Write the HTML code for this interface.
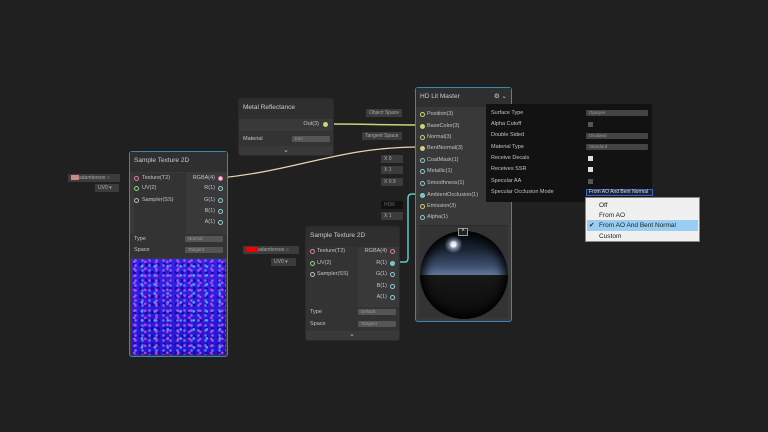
<!DOCTYPE html>
<html><head><meta charset="utf-8"><style>
*{margin:0;padding:0;box-sizing:border-box}
body{width:768px;height:432px;background:#202020;position:relative;overflow:hidden;font-family:"Liberation Sans",sans-serif;font-size:5.5px;color:#c4c4c4}
.a{position:absolute}
.node{position:absolute;background:#393939;border-radius:3px;border:1px solid #2a2a2a}
.sel{border:1px solid #3a86b8}
.hd{position:absolute;left:0;right:0;top:0;background:#2f2f2f;font-size:6.5px;color:#ccc;padding:5px 4px}
.t{position:absolute;white-space:nowrap;line-height:7px}
.p{position:absolute;width:5px;height:5px;border-radius:50%;border:1px solid #8ccfd0}
.chip{position:absolute;background:#3c3c3c;height:8px;border-radius:1px;font-size:5px;color:#aaa;line-height:8px;padding:0 3px;white-space:nowrap}
.dd{position:absolute;background:#555;height:6px;border-radius:1px;font-size:4.5px;color:#999;line-height:6px;padding:0 3px}
</style></head><body>
<svg class="a" style="left:0;top:0" width="768" height="432">
<path d="M328 124 C370 124 380 125 420 125" stroke="#cfd37a" stroke-width="1.5" fill="none"/>
<path d="M220 178 C300 170 340 147 420 147" stroke="#e8d4b0" stroke-width="1.3" fill="none"/>
<path d="M394 262 L405 262 Q408 262 408 258 L408 198 Q408 194 412 194 L420 194" stroke="#62c6c8" stroke-width="1.5" fill="none"/>
</svg>
<!-- Metal Reflectance -->
<div class="node" style="left:238px;top:98px;width:96px;height:58px">
<div class="hd" style="height:20px">Metal Reflectance</div>
<div class="t" style="right:14px;top:22px">Out(3)</div><div class="p" style="right:5px;top:23px;background:#cfd37a;border-color:#cfd37a"></div>
<div class="a" style="left:0;right:0;top:32px;height:15px;background:#333"></div>
<div class="t" style="left:4px;top:37px">Material</div><div class="dd" style="left:53px;top:37px;width:38px">Iron</div>
<div class="t" style="left:44px;top:48px;font-size:7px">⌄</div>
</div>
<!-- left chips -->
<div class="chip" style="left:68px;top:174px;width:52px"><span style="display:inline-block;width:8px;height:5px;background:#c88;vertical-align:middle"></span>adamtorsoo ○</div>
<div class="chip" style="left:95px;top:184px;width:24px">UV0 ▾</div>
<!-- Sample Texture left -->
<div class="node sel" style="left:129px;top:151px;width:99px;height:206px">
<div class="hd" style="height:20px">Sample Texture 2D</div>
<div class="a" style="left:4px;top:21px;width:52px;height:62px;background:#333"></div>
<div class="p" style="left:4px;top:24px;border-color:#e07f9a"></div><div class="t" style="left:12px;top:23px">Texture(T2)</div>
<div class="p" style="left:4px;top:34px;border-color:#8fd08f"></div><div class="t" style="left:12px;top:33px">UV(2)</div>
<div class="p" style="left:4px;top:46px;border-color:#bbb"></div><div class="t" style="left:12px;top:45px">Sampler(SS)</div>
<div class="t" style="right:12px;top:23px">RGBA(4)</div><div class="p" style="right:4px;top:24px;border-color:#e07f9a;background:#e8d4f0"></div>
<div class="t" style="right:12px;top:33px">R(1)</div><div class="p" style="right:4px;top:34px"></div>
<div class="t" style="right:12px;top:45px">G(1)</div><div class="p" style="right:4px;top:46px"></div>
<div class="t" style="right:12px;top:56px">B(1)</div><div class="p" style="right:4px;top:57px"></div>
<div class="t" style="right:12px;top:67px">A(1)</div><div class="p" style="right:4px;top:68px"></div>
<div class="a" style="left:0;right:0;top:82px;height:24px;background:#333"></div>
<div class="t" style="left:4px;top:84px">Type</div><div class="dd" style="left:55px;top:84px;width:38px">Normal</div>
<div class="t" style="left:4px;top:95px">Space</div><div class="dd" style="left:55px;top:95px;width:38px">Tangent</div>
<div class="a" style="left:1px;right:1px;top:107px;bottom:1px;background:radial-gradient(circle at 30% 40%,#d040d0 0 1px,transparent 1.6px) 0 0/11px 7px,radial-gradient(circle at 60% 60%,#40b0f0 0 1px,transparent 1.6px) 3px 2px/13px 9px,radial-gradient(circle at 50% 50%,#7070ff 0 1px,transparent 1.6px) 1px 4px/7px 5px,radial-gradient(circle at 20% 70%,#1a0aa0 0 1.5px,transparent 2px) 2px 0/6px 8px,linear-gradient(#3a20e8,#2814d0)"></div>
</div>
<!-- right chips -->
<div class="chip" style="left:243px;top:246px;width:56px"><span style="display:inline-block;width:12px;height:5px;background:#e00;vertical-align:middle"></span>adamtorsoo ○</div>
<div class="chip" style="left:271px;top:258px;width:25px">UV0 ▾</div>
<!-- Sample Texture right -->
<div class="node" style="left:305px;top:226px;width:95px;height:115px">
<div class="hd" style="height:20px">Sample Texture 2D</div>
<div class="a" style="left:0;top:20px;width:52px;height:62px;background:#333"></div>
<div class="p" style="left:4px;top:22px;border-color:#e07f9a"></div><div class="t" style="left:11px;top:21px">Texture(T2)</div>
<div class="p" style="left:4px;top:34px;border-color:#8fd08f"></div><div class="t" style="left:11px;top:33px">UV(2)</div>
<div class="p" style="left:4px;top:45px;border-color:#bbb"></div><div class="t" style="left:11px;top:44px">Sampler(SS)</div>
<div class="t" style="right:12px;top:21px">RGBA(4)</div><div class="p" style="right:4px;top:22px;border-color:#e07f9a"></div>
<div class="t" style="right:12px;top:33px">R(1)</div><div class="p" style="right:4px;top:34px;background:#62c6c8"></div>
<div class="t" style="right:12px;top:44px">G(1)</div><div class="p" style="right:4px;top:45px"></div>
<div class="t" style="right:12px;top:56px">B(1)</div><div class="p" style="right:4px;top:57px"></div>
<div class="t" style="right:12px;top:67px">A(1)</div><div class="p" style="right:4px;top:68px"></div>
<div class="a" style="left:0;right:0;top:80px;height:24px;background:#333"></div>
<div class="t" style="left:4px;top:82px">Type</div><div class="dd" style="left:52px;top:82px;width:38px">Default</div>
<div class="t" style="left:4px;top:94px">Space</div><div class="dd" style="left:52px;top:94px;width:38px">Tangent</div>
<div class="t" style="left:43px;top:104px;font-size:7px">⌄</div>
</div>
<!-- master chips -->
<div class="chip" style="left:366px;top:109px;width:36px">Object Space</div>
<div class="chip" style="left:362px;top:132px;width:40px">Tangent Space</div>
<div class="chip" style="left:381px;top:155px;width:22px">X 0</div>
<div class="chip" style="left:381px;top:166px;width:22px">X 1</div>
<div class="chip" style="left:381px;top:178px;width:22px">X 0.9</div>
<div class="chip" style="left:381px;top:201px;width:22px;background:#111;color:#666">HDR</div>
<div class="chip" style="left:381px;top:212px;width:22px">X 1</div>
<!-- HD Lit Master -->
<div class="node sel" style="left:415px;top:87px;width:97px;height:235px">
<div class="hd" style="height:19px">HD Lit Master<span style="position:absolute;right:4px;top:4px">⚙ ⌄</span></div>
<div class="p" style="left:4px;top:24px;border-color:#cfd37a"></div><div class="t" style="left:11px;top:23px">Position(3)</div>
<div class="p" style="left:4px;top:36px;border-color:#cfd37a;background:#cfd37a"></div><div class="t" style="left:11px;top:35px">BaseColor(3)</div>
<div class="p" style="left:4px;top:47px;border-color:#cfd37a"></div><div class="t" style="left:11px;top:46px">Normal(3)</div>
<div class="p" style="left:4px;top:58px;border-color:#cfd37a;background:#cfd37a"></div><div class="t" style="left:11px;top:57px">BentNormal(3)</div>
<div class="p" style="left:4px;top:70px"></div><div class="t" style="left:11px;top:69px">CoatMask(1)</div>
<div class="p" style="left:4px;top:81px"></div><div class="t" style="left:11px;top:80px">Metallic(1)</div>
<div class="p" style="left:4px;top:93px"></div><div class="t" style="left:11px;top:92px">Smoothness(1)</div>
<div class="p" style="left:4px;top:105px;background:#62c6c8"></div><div class="t" style="left:11px;top:104px">AmbientOcclusion(1)</div>
<div class="p" style="left:4px;top:116px;border-color:#cfd37a"></div><div class="t" style="left:11px;top:115px">Emission(3)</div>
<div class="p" style="left:4px;top:127px"></div><div class="t" style="left:11px;top:126px">Alpha(1)</div>
<div class="a" style="left:3px;right:3px;top:137px;bottom:3px;background:#333;border-top:1px solid #2a2a2a"></div>
<div class="a" style="left:4px;top:143px;width:88px;height:88px;border-radius:50%;background:#000;overflow:hidden">
<div class="a" style="left:0;top:0;width:88px;height:44px;background:radial-gradient(circle at 38% 30%,#fff 0 2.5px,#8898b0 4px,transparent 9px),linear-gradient(#0a0d14 0,#18222f 40%,#3e5070 80%,#62789a 100%)"></div>
<div class="a" style="left:0;top:44px;width:88px;height:44px;background:linear-gradient(#181818,#0b0b0b)"></div>
<div class="a" style="left:0;top:0;width:88px;height:88px;border-radius:50%;box-shadow:inset 0 0 10px 4px #000"></div>
</div>
<div class="a" style="left:42px;top:140px;width:10px;height:8px;background:#222;border:1px solid #999;color:#fff;font-size:6px;text-align:center;line-height:6px">^</div>
</div>
<!-- settings popup -->
<div class="a" style="left:486px;top:104px;width:166px;height:98px;background:#121212">
<div class="t" style="left:5px;top:6px">Surface Type</div><div class="dd" style="left:100px;top:6px;width:62px;background:#444">Opaque</div>
<div class="t" style="left:5px;top:17px">Alpha Cutoff</div><div class="a" style="left:102px;top:18px;width:5px;height:5px;background:#555"></div>
<div class="t" style="left:5px;top:28px">Double Sided</div><div class="dd" style="left:100px;top:29px;width:62px;background:#444">Disabled</div>
<div class="t" style="left:5px;top:40px">Material Type</div><div class="dd" style="left:100px;top:40px;width:62px;background:#444">Standard</div>
<div class="t" style="left:5px;top:51px">Receive Decals</div><div class="a" style="left:102px;top:52px;width:5px;height:5px;background:#ddd"></div>
<div class="t" style="left:5px;top:62px">Receives SSR</div><div class="a" style="left:102px;top:63px;width:5px;height:5px;background:#ddd"></div>
<div class="t" style="left:5px;top:74px">Specular AA</div><div class="a" style="left:102px;top:75px;width:5px;height:5px;background:#555"></div>
<div class="t" style="left:5px;top:85px">Specular Occlusion Mode</div>
<div class="a" style="left:100px;top:85px;width:67px;height:7px;background:#223;border:1px solid #36c;font-size:5px;color:#ddd;line-height:5px;padding-left:2px;white-space:nowrap">From AO And Bent Normal</div>
</div>
<!-- dropdown list -->
<div class="a" style="left:585px;top:197px;width:115px;height:45px;background:#f0f0f0;border:1px solid #888;color:#222;font-size:6.5px">
<div class="t" style="left:13px;top:3px;line-height:9px">Off</div>
<div class="t" style="left:13px;top:13px;line-height:9px">From AO</div>
<div class="a" style="left:1px;right:1px;top:22px;height:11px;background:#99cdf2"></div>
<div class="t" style="left:3px;top:23px;line-height:9px">✔</div>
<div class="t" style="left:13px;top:23px;line-height:9px">From AO And Bent Normal</div>
<div class="t" style="left:13px;top:34px;line-height:9px">Custom</div>
</div>
</body></html>
